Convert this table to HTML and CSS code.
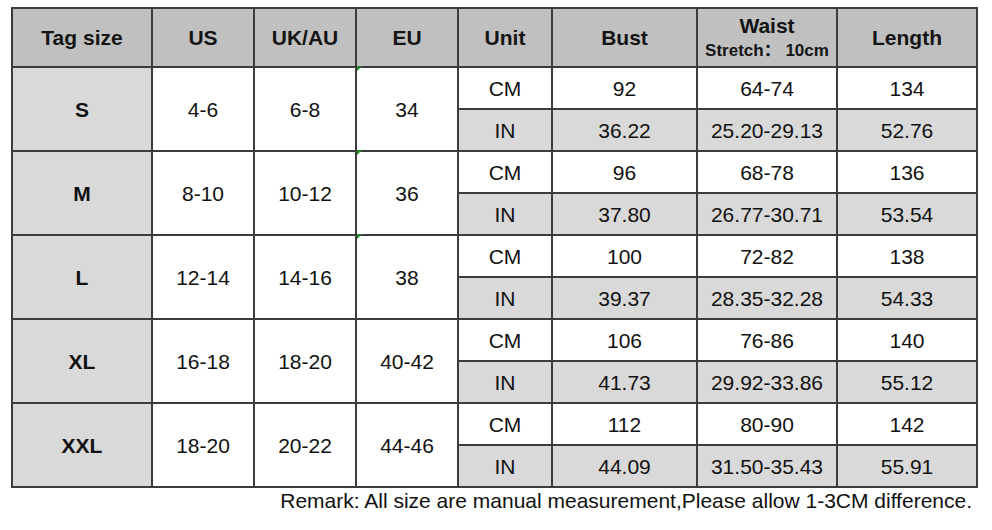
FILE: index.html
```html
<!DOCTYPE html>
<html>
<head>
<meta charset="utf-8">
<link rel="stylesheet" href="styles.css">
</head>
<body>
<div class="page">
  <table class="chart">
    <colgroup>
      <col class="c-tag"><col class="c-us"><col class="c-uk"><col class="c-eu"><col class="c-unit"><col class="c-bust"><col class="c-waist"><col class="c-len">
    </colgroup>
    <thead>
      <tr class="head">
        <th>Tag size</th><th>US</th><th>UK/AU</th><th>EU</th><th>Unit</th><th>Bust</th>
        <th class="waist"><div class="w1">Waist</div><div class="w2">Stretch：&nbsp;10cm</div></th>
        <th>Length</th>
      </tr>
    </thead>
    <tbody>
      <tr class="cm"><td class="tag" rowspan="2">S</td><td rowspan="2">4-6</td><td rowspan="2">6-8</td><td rowspan="2" class="eu mark">34</td><td>CM</td><td>92</td><td>64-74</td><td>134</td></tr>
      <tr class="in"><td>IN</td><td>36.22</td><td>25.20-29.13</td><td>52.76</td></tr>
      <tr class="cm"><td class="tag" rowspan="2">M</td><td rowspan="2">8-10</td><td rowspan="2">10-12</td><td rowspan="2" class="eu mark">36</td><td>CM</td><td>96</td><td>68-78</td><td>136</td></tr>
      <tr class="in"><td>IN</td><td>37.80</td><td>26.77-30.71</td><td>53.54</td></tr>
      <tr class="cm"><td class="tag" rowspan="2">L</td><td rowspan="2">12-14</td><td rowspan="2">14-16</td><td rowspan="2" class="eu mark">38</td><td>CM</td><td>100</td><td>72-82</td><td>138</td></tr>
      <tr class="in"><td>IN</td><td>39.37</td><td>28.35-32.28</td><td>54.33</td></tr>
      <tr class="cm"><td class="tag" rowspan="2">XL</td><td rowspan="2">16-18</td><td rowspan="2">18-20</td><td rowspan="2" class="eu">40-42</td><td>CM</td><td>106</td><td>76-86</td><td>140</td></tr>
      <tr class="in"><td>IN</td><td>41.73</td><td>29.92-33.86</td><td>55.12</td></tr>
      <tr class="cm"><td class="tag" rowspan="2">XXL</td><td rowspan="2">18-20</td><td rowspan="2">20-22</td><td rowspan="2" class="eu">44-46</td><td>CM</td><td>112</td><td>80-90</td><td>142</td></tr>
      <tr class="in"><td>IN</td><td>44.09</td><td>31.50-35.43</td><td>55.91</td></tr>
    </tbody>
  </table>
  <p class="remark">Remark: All size are manual measurement,Please allow 1-3CM difference.</p>
</div>
</body>
</html>
```

FILE: styles.css
```css
html, body {
  margin: 0;
  padding: 0;
  background: #ffffff;
}
.page {
  width: 992px;
  height: 530px;
  padding: 7px 0 0 11px;
  box-sizing: border-box;
  font-family: "Liberation Sans", Arial, "Noto Sans CJK SC", sans-serif;
  color: #111;
}
.chart {
  border-collapse: collapse;
  table-layout: fixed;
  width: 967px;
  border: 2px solid #6a6a6a;
}
.c-tag { width: 140px; }
.c-us { width: 102px; }
.c-uk { width: 102px; }
.c-eu { width: 102px; }
.c-unit { width: 94px; }
.c-bust { width: 145px; }
.c-waist { width: 140px; }
.c-len { width: 140px; }
.chart th, .chart td {
  border: 2px solid #3c3c3c;
  text-align: center;
  vertical-align: middle;
  padding: 0;
  font-size: 21px;
}
.head th {
  background: #c0c0c0;
  font-weight: bold;
  height: 57px;
  color: #141414;
}
.waist { line-height: 1; }
.w1 { font-size: 21px; margin-top: -2px; }
.w2 { font-size: 17px; margin-top: 6px; }
.chart td {
  height: 42px;
  font-weight: normal;
  padding-top: 2px;
  box-sizing: border-box;
}
.chart td.tag {
  background: #d9d9d9;
  font-weight: bold;
  color: #111;
}
.in td { background: #d9d9d9; }
.cm td { background: #ffffff; }
.cm td.tag { background: #d9d9d9; }
.eu { position: relative; }
.mark::before {
  content: "";
  position: absolute;
  left: 0;
  top: -2px;
  border-top: 5px solid #1e8c1e;
  border-right: 5px solid transparent;
}
.remark {
  margin: 0;
  width: 961px;
  text-align: right;
  font-size: 21px;
  line-height: 24px;
  padding-top: 1px;
  color: #111;
}
```
